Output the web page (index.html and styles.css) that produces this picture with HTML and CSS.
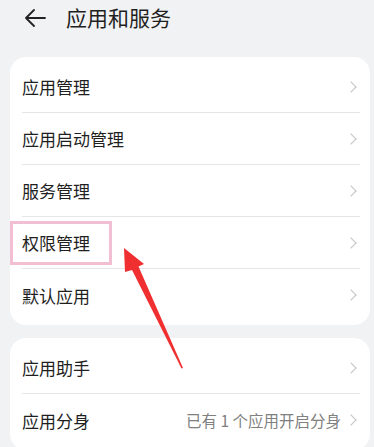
FILE: index.html
```html
<!DOCTYPE html>
<html>
<head>
    <meta charset="utf-8">
    <meta name="viewport" content="width=device-width, initial-scale=1">
    <title>应用和服务</title>
    <link rel="stylesheet" href="styles.css">
</head>
<body>
    <div class="header">
        <svg class="back" width="22" height="18" viewBox="0 0 22 18">
            <path d="M21 9H2M10 1L2 9l8 8" fill="none" stroke="#222" stroke-width="1.8" stroke-linecap="round" stroke-linejoin="round"/>
        </svg>
        <span class="title">应用和服务</span>
    </div>

    <div class="card">
        <div class="row"><span class="label">应用管理</span><span class="chev"></span></div>
        <div class="row"><span class="label">应用启动管理</span><span class="chev"></span></div>
        <div class="row"><span class="label">服务管理</span><span class="chev"></span></div>
        <div class="row"><span class="label">权限管理</span><span class="chev"></span></div>
        <div class="row"><span class="label">默认应用</span><span class="chev"></span></div>
    </div>

    <div class="card">
        <div class="row"><span class="label">应用助手</span><span class="chev"></span></div>
        <div class="row"><span class="label">应用分身</span><span class="info">已有 1 个应用开启分身</span><span class="chev"></span></div>
    </div>

    <!-- пометки поверх скриншота -->
    <div class="mark"></div>
    <svg class="arrow" width="80" height="130" viewBox="0 0 80 130">
        <path d="M4 7 L24 23 L18.5 25.5 L63 127 L61.5 127.5 L12 29 L5 31 Z" fill="#f03030"/>
    </svg>
</body>
</html>
```

FILE: styles.css
```css
body {
    margin: 0;
    background-color: #f1f2f4;
    font-family: "Noto Sans CJK SC", "Noto Sans", sans-serif;
    color: #1f1f1f;
    position: relative;
    overflow: hidden;
}
.header {
    height: 35px;
    display: flex;
    align-items: center;
    padding-left: 24px;
    margin-bottom: 22px;
}
.back {
    margin-right: 20px;
}
.title {
    font-size: 21px;
    line-height: 35px;
}
.card {
    background-color: #fff;
    margin: 0 4px 13px 10px;
    border-radius: 16px;
    padding: 4px 10px 4px 12px;
}
.row {
    height: 52px;
    display: flex;
    align-items: center;
    border-bottom: 1px solid #e6e6e6;
    box-sizing: border-box;
}
.row:last-child {
    border-bottom: none;
}
.label {
    font-size: 17px;
    flex: 1;
}
.info {
    font-size: 15.5px;
    color: #808080;
    margin-right: 6px;
}
.chev {
    width: 7px;
    height: 7px;
    border-top: 1.3px solid #c4c4c4;
    border-right: 1.3px solid #c4c4c4;
    transform: rotate(45deg);
    margin-right: 5px;
}
.mark {
    position: absolute;
    left: 10px;
    top: 221px;
    width: 96px;
    height: 38px;
    border: 3px solid #f2bfd2;
}
.arrow {
    position: absolute;
    left: 120px;
    top: 241px;
}
```
